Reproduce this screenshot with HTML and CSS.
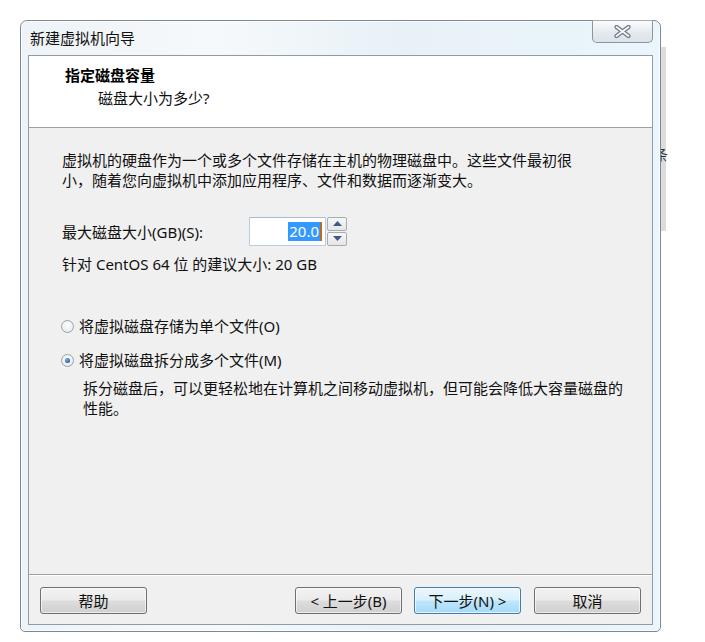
FILE: index.html
```html
<!DOCTYPE html>
<html lang="zh-CN">
<head>
<meta charset="utf-8">
<title>新建虚拟机向导</title>
<link rel="stylesheet" href="styles.css">
</head>
<body>
<div class="desk">
  <div class="behind"><span class="behind-char">条</span></div>
  <div class="window">
    <div class="titlebar">
      <span class="title">新建虚拟机向导</span>
      <button class="close" aria-label="关闭">
        <svg width="17" height="13" viewBox="0 0 17 13">
          <path d="M2.5 2 L14.5 11 M14.5 2 L2.5 11" stroke="#6f7682" stroke-width="4.2" stroke-linecap="round" fill="none"/>
          <path d="M2.5 2 L14.5 11 M14.5 2 L2.5 11" stroke="#f4f6f8" stroke-width="2" stroke-linecap="round" fill="none"/>
        </svg>
      </button>
    </div>
    <div class="client">
      <div class="header">
        <div class="h-title">指定磁盘容量</div>
        <div class="h-sub">磁盘大小为多少?</div>
      </div>
      <div class="body">
        <p class="intro">虚拟机的硬盘作为一个或多个文件存储在主机的物理磁盘中。这些文件最初很<br>小，随着您向虚拟机中添加应用程序、文件和数据而逐渐变大。</p>
        <div class="size-row">
          <span class="size-label">最大磁盘大小(GB)(S):</span>
          <div class="spin">
            <div class="spin-input"><span class="sel">20.0</span><span class="caret"></span></div>
            <div class="spin-btns">
              <div class="spin-btn"><svg width="9" height="5" viewBox="0 0 9 5"><path d="M0 5 L4.5 0 L9 5 Z" fill="#3c5a84"/></svg></div>
              <div class="spin-btn"><svg width="9" height="5" viewBox="0 0 9 5"><path d="M0 0 L4.5 5 L9 0 Z" fill="#3c5a84"/></svg></div>
            </div>
          </div>
        </div>
        <p class="rec">针对 CentOS 64 位 的建议大小: 20 GB</p>
        <div class="radios">
          <label class="radio"><span class="dot"></span>将虚拟磁盘存储为单个文件(O)</label>
          <label class="radio"><span class="dot checked"></span>将虚拟磁盘拆分成多个文件(M)</label>
          <p class="desc">拆分磁盘后，可以更轻松地在计算机之间移动虚拟机，但可能会降低大容量磁盘的<br>性能。</p>
        </div>
      </div>
      <div class="footer">
        <button class="btn">帮助</button>
        <div class="spacer"></div>
        <button class="btn">&lt; 上一步(B)</button>
        <button class="btn default">下一步(N) &gt;</button>
        <button class="btn last">取消</button>
      </div>
    </div>
  </div>
</div>
</body>
</html>
```
FILE: styles.css
```css
* { box-sizing: border-box; }
html, body { margin: 0; padding: 0; background: #ffffff; }
body {
  font-family: "Noto Sans", "Noto Sans CJK SC", sans-serif;
  font-size: 15px;
  color: #101010;
  width: 705px;
  height: 642px;
  overflow: hidden;
}
.desk { position: relative; width: 705px; height: 642px; padding: 20px 0 0 20px; }
.behind {
  position: absolute;
  left: 600px; top: 47px;
  width: 66px; height: 184px;
  background: #dcdcdc;
  z-index: 0;
}
.behind-char {
  position: absolute; left: 54px; top: 100px;
  font-size: 14px; line-height: 14px; color: #333;
  font-family: "Noto Sans CJK SC", sans-serif;
}
.window {
  position: relative;
  z-index: 1;
  width: 641px;
  height: 612px;
  border: 1px solid #7e8893;
  border-radius: 7px 7px 5px 5px;
  background: linear-gradient(90deg, #eef3f7 0%, #f6f9fb 30%, #e8f1f7 60%, #eaf6fb 100%);
  display: flex;
  flex-direction: column;
  padding: 0 7px 6px 7px;
  box-shadow: inset 0 0 0 1px rgba(255,255,255,0.7);
}
.titlebar {
  height: 34px;
  display: flex;
  align-items: flex-start;
  justify-content: space-between;
}
.title {
  margin-top: 7px;
  margin-left: 2px;
  font-size: 15px;
  line-height: 20px;
  color: #111;
  font-family: "Noto Sans CJK SC", sans-serif;
}
.close {
  margin-top: -1px;
  width: 61px;
  height: 23px;
  border: 1px solid #8c96a1;
  border-top-color: #a6afb8;
  border-radius: 0 0 5px 5px;
  background: linear-gradient(#fbfcfd, #e6eaee 55%, #dde3e8);
  display: flex;
  align-items: center;
  justify-content: center;
  padding: 0;
}
.client {
  flex: 1;
  border: 1px solid #8f9ba6;
  background: #f0f0f0;
  display: flex;
  flex-direction: column;
}
.header {
  height: 72px;
  background: #ffffff;
  border-bottom: 1px solid #a0a0a0;
  padding: 9px 0 0 36px;
}
.h-title { font-weight: bold; line-height: 20px; font-size: 15px; color: #000; font-family: "Noto Sans CJK SC", sans-serif; }
.h-sub { margin-top: 3px; margin-left: 33px; line-height: 20px; }
.body { flex: 1; padding: 22px 0 0 33px; }
.intro { margin: 0; line-height: 20px; }
.size-row { display: flex; align-items: center; margin-top: 27px; height: 28px; }
.size-label { width: 187px; }
.spin { display: flex; height: 29px; }
.spin-input {
  width: 77px;
  height: 29px;
  border: 1px solid #b9cde0;
  border-top-color: #a3bcd4;
  background: #fff;
  display: flex;
  align-items: center;
  justify-content: flex-end;
  padding-right: 3px;
}
.sel {
  background: #3399ff;
  color: #fff;
  line-height: 19px;
  padding: 0 1px;
}
.caret { width: 2px; height: 19px; background: #c06a1a; }
.spin-btns { display: flex; flex-direction: column; margin-left: 1px; }
.spin-btn {
  width: 20px;
  height: 14px;
  border: 1px solid #a7acb2;
  border-radius: 2px;
  background: linear-gradient(#f7f7f7, #e6e6e6);
  display: flex;
  align-items: center;
  justify-content: center;
}
.spin-btn + .spin-btn { margin-top: 1px; }
.rec { margin: 9px 0 0 0; line-height: 20px; }
.radios { margin-top: 42px; }
.radio { display: flex; align-items: center; line-height: 20px; height: 20px; }
.radio + .radio { margin-top: 14px; }
.dot {
  width: 13px; height: 13px;
  border-radius: 50%;
  border: 1px solid #9aa3ac;
  background: radial-gradient(circle at 50% 40%, #ffffff 0%, #e9ebee 70%, #d6dade 100%);
  margin-right: 5px;
  margin-left: -1px;
  display: flex; align-items: center; justify-content: center;
}
.dot.checked::after {
  content: "";
  width: 5px; height: 5px;
  border-radius: 50%;
  background: radial-gradient(circle at 40% 35%, #7fb4ea, #1c4f9a 80%);
}
.desc { margin: 8px 0 0 21px; line-height: 20px; }
.footer {
  height: 50px;
  border-top: 1px solid #a0a0a0;
  box-shadow: inset 0 1px 0 #ffffff;
  display: flex;
  align-items: flex-start;
  padding: 12px 11px 0 11px;
}
.spacer { flex: 1; }
.btn {
  width: 107px;
  height: 27px;
  margin-right: 12px;
  border: 1px solid #707070;
  border-radius: 3px;
  background: linear-gradient(#f2f2f2 0%, #ebebeb 48%, #dddddd 52%, #cfcfcf 100%);
  box-shadow: inset 0 0 0 1px rgba(255,255,255,0.6);
  font-family: "Noto Sans", "Noto Sans CJK SC", sans-serif;
  font-size: 15px;
  color: #111;
  padding: 0;
  line-height: 20px;
}
.btn.default {
  border-color: #3c7fb1;
  background: linear-gradient(#eaf6fd 0%, #d9f0fc 48%, #bee6fd 52%, #a7d9f5 100%);
  box-shadow: inset 0 0 0 1px rgba(255,255,255,0.7);
}
.btn.last { margin-right: 0; margin-left: 1px; }
.footer .btn:first-child { margin-right: 0; }
```
